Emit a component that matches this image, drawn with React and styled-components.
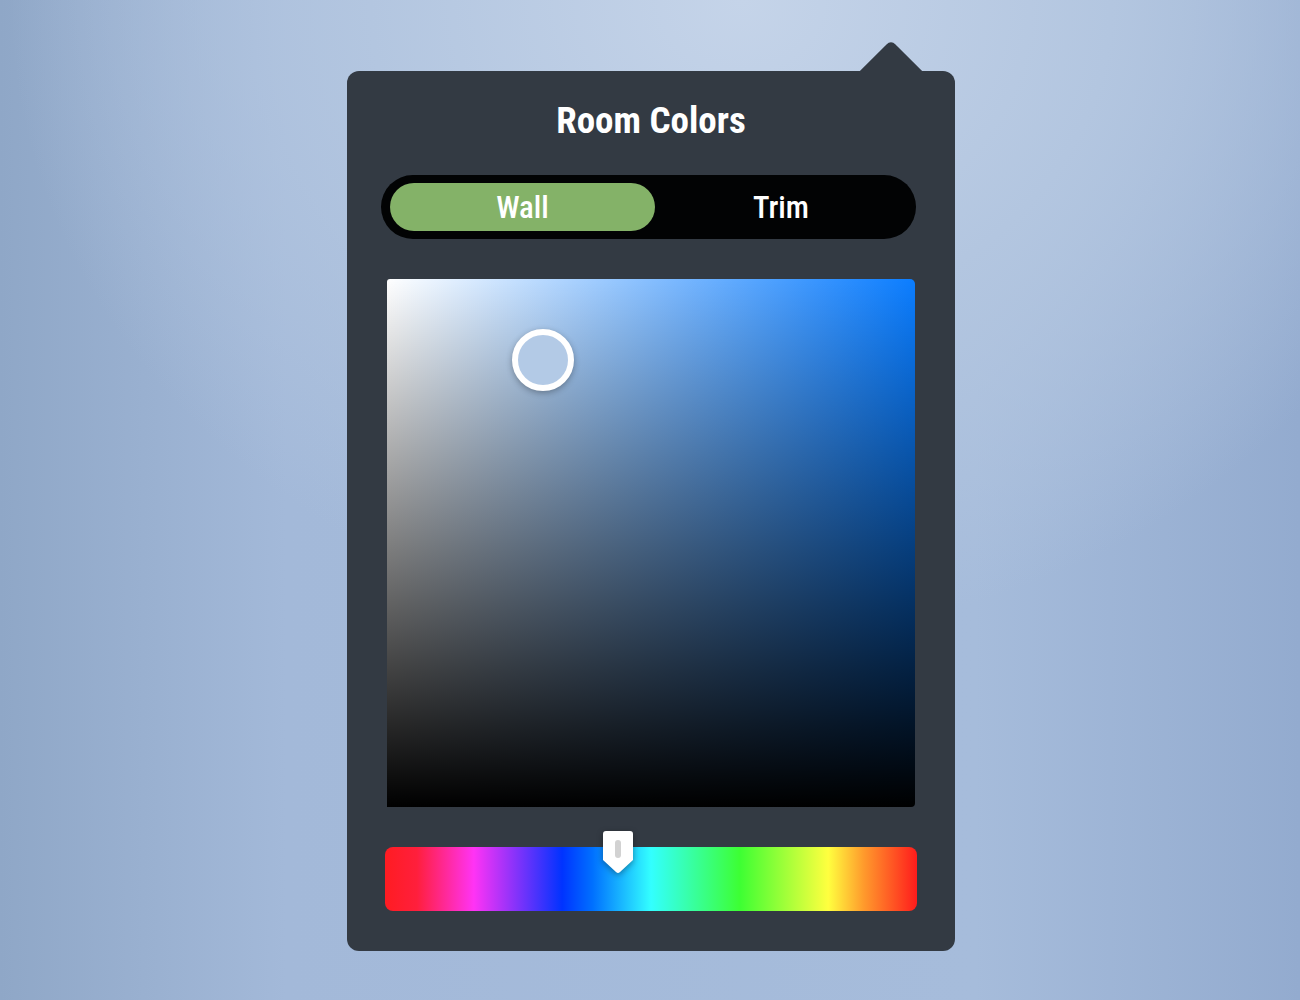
import React, { useState } from 'react';
import styled, { createGlobalStyle } from 'styled-components';

// hue position of the slider thumb, 0..1 (left to right)
const HUE_POS = 0.438;
const PICKED = { x: 0.296, y: 0.153 };

const GlobalStyle = createGlobalStyle`
    html, body {
        margin: 0;
        padding: 0;
        height: 100%;
    }
    body {
        font-family: 'Roboto', 'Liberation Sans', sans-serif;
        background: #a5bbda;
    }
`;

const Page = styled.div`
    width: 1300px;
    height: 1000px;
    overflow: hidden;
    padding: 71px 0 0 2px;
    box-sizing: border-box;
    background:
        radial-gradient(ellipse 75% 85% at 57% 0%, #c5d4e9 0%, #b3c6e0 38%, rgba(165, 187, 218, 0) 75%),
        linear-gradient(to right, #8fa7c7 0%, #a3b9d9 22%, #a6bcdb 75%, #93abcf 100%);
`;

const Panel = styled.div`
    position: relative;
    width: 608px;
    margin: 0 auto;
    box-sizing: border-box;
    padding: 30px 38px 40px;
    display: flex;
    flex-direction: column;
    gap: 40px;
    background: #333a43;
    border-radius: 12px;
`;

const Caret = styled.div`
    position: absolute;
    top: -22px;
    left: 522px;
    width: 44px;
    height: 44px;
    background: #333a43;
    border-radius: 6px 0 0 0;
    transform: rotate(45deg);
`;

const Title = styled.h1`
    margin: 0 0 -6px;
    text-align: center;
    color: #fff;
    font-size: 37px;
    line-height: 40px;
    font-weight: 700;
    font-stretch: 84%;
`;

const Toggle = styled.div`
    margin: 0 1px 0 -4px;
    height: 64px;
    box-sizing: border-box;
    padding: 8px 9px;
    background: #020304;
    border-radius: 32px;
    display: grid;
    grid-template-columns: 265px 1fr;
`;

const ToggleOption = styled.button`
    border: 0;
    margin: 0;
    padding: 0;
    height: 48px;
    border-radius: 24px;
    background: ${(p) => (p.active ? '#84b268' : 'transparent')};
    color: #fff;
    font-family: inherit;
    font-size: 31px;
    font-weight: 500;
    font-stretch: 82%;
    cursor: pointer;
`;

const Picker = styled.div`
    position: relative;
    margin: 0 2px;
    height: 528px;
    border-radius: 3px 5px 4px 0;
    background:
        linear-gradient(to top, #000 0%, rgba(0, 0, 0, 0) 100%),
        linear-gradient(to right, #fff 0%, #0b7dff 100%);
`;

const PickerHandle = styled.div`
    position: absolute;
    width: 50px;
    height: 50px;
    margin: -31px 0 0 -31px;
    border: 6px solid #fff;
    border-radius: 50%;
    background: #b3cae6;
    box-shadow: 0 2px 6px rgba(0, 0, 0, 0.3);
`;

const HueTrack = styled.div`
    position: relative;
    height: 64px;
    border-radius: 8px;
    background: linear-gradient(
        to right,
        #ff1c22 0%,
        #ff1f3c 6%,
        #ff33f5 16.7%,
        #0033ff 33.3%,
        #0070ff 39%,
        #33ffff 50%,
        #3dff33 66.7%,
        #ffff3f 83.3%,
        #ff9a2c 90%,
        #ff1c1c 100%
    );
`;

const HueThumb = styled.svg`
    position: absolute;
    top: -16px;
    margin-left: -15px;
    filter: drop-shadow(0 2px 3px rgba(0, 0, 0, 0.35));
`;

const App = () => {
    const [mode, setMode] = useState('wall');

    return (
        <Page>
            <GlobalStyle />
            <Panel>
                <Caret />
                <Title>Room Colors</Title>
                <Toggle>
                    <ToggleOption active={mode === 'wall'} onClick={() => setMode('wall')}>
                        Wall
                    </ToggleOption>
                    <ToggleOption active={mode === 'trim'} onClick={() => setMode('trim')}>
                        Trim
                    </ToggleOption>
                </Toggle>
                <Picker>
                    <PickerHandle style={{ left: `${PICKED.x * 100}%`, top: `${PICKED.y * 100}%` }} />
                </Picker>
                <HueTrack>
                    <HueThumb width="30" height="43" viewBox="0 0 30 43" style={{ left: `${HUE_POS * 100}%` }}>
                        <path d="M3 0H27Q30 0 30 3V29L17 41Q15 43 13 41L0 29V3Q0 0 3 0Z" fill="#fff" />
                        <rect x="12" y="9" width="6" height="18" rx="3" fill="#d2d2d2" />
                    </HueThumb>
                </HueTrack>
            </Panel>
        </Page>
    );
};

export default App;
